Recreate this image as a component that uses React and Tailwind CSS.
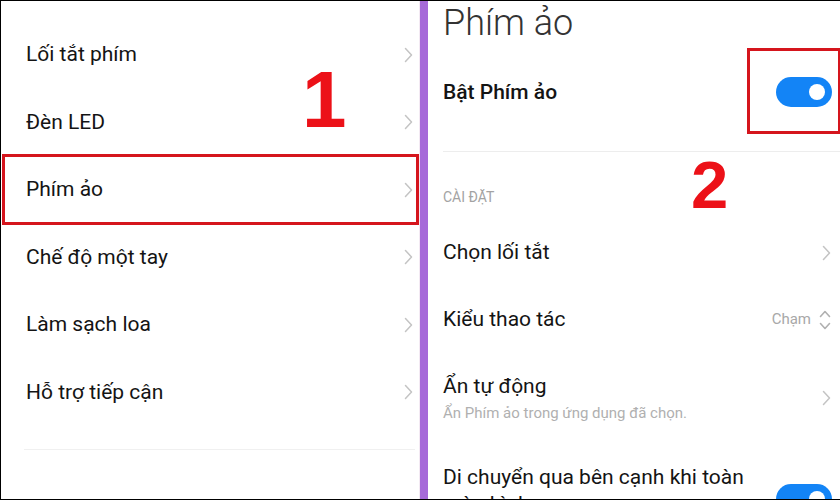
import React from "react";

const Chevron = ({ className = "" }) => (
  <svg width="9" height="16" viewBox="0 0 9 16" className={className}>
    <path d="M1.5 1.5 L7.5 8 L1.5 14.5" fill="none" stroke="#c4c4c4" strokeWidth="1.5" strokeLinecap="round" strokeLinejoin="round" />
  </svg>
);

const UpDown = () => (
  <svg width="12" height="22" viewBox="0 0 12 22">
    <path d="M1.5 7.5 L6 2.5 L10.5 7.5" fill="none" stroke="#b0b0b0" strokeWidth="1.6" strokeLinecap="round" strokeLinejoin="round" />
    <path d="M1.5 14.5 L6 19.5 L10.5 14.5" fill="none" stroke="#b0b0b0" strokeWidth="1.6" strokeLinecap="round" strokeLinejoin="round" />
  </svg>
);

const Toggle = () => (
  <div className="w-[56px] h-[30px] rounded-full bg-[#1384f6] flex items-center justify-end pr-[7px]">
    <div className="w-[16px] h-[16px] rounded-full bg-white" />
  </div>
);

const leftItems = ["Lối tắt phím", "Đèn LED", "Phím ảo", "Chế độ một tay", "Làm sạch loa", "Hỗ trợ tiếp cận"];

export default function App() {
  return (
    <div
      className="relative w-[840px] h-[500px] overflow-hidden bg-white border-t border-l border-b border-black flex text-[#141414]"
      style={{ fontFamily: "Roboto, 'Noto Sans', sans-serif" }}
    >
      {/* Left panel */}
      <div className="w-[419px] h-full shrink-0 flex flex-col pt-[20px] border-r border-[#f3e9f3]">
        {leftItems.map((t) => (
          <div key={t} className="h-[67.5px] shrink-0 flex items-center justify-between pl-[25px] pr-[6px]">
            <span className="text-[21px] leading-none">{t}</span>
            <Chevron />
          </div>
        ))}
        <div className="mt-[23px] ml-[23px] mr-[4px] h-px shrink-0 bg-[#f0f0f0]" />
      </div>

      {/* Divider */}
      <div className="w-[8px] h-full shrink-0 bg-[#a66ad9]" />

      {/* Right panel */}
      <div className="flex-1 h-full flex flex-col pl-[15px]">
        <div className="h-[44px] shrink-0 flex items-center">
          <span className="text-[36px] font-light leading-none text-[#333]">Phím ảo</span>
        </div>
        <div className="h-[94px] shrink-0 flex items-center justify-between pr-[8px]">
          <span className="text-[21px] font-medium leading-none">Bật Phím ảo</span>
          <Toggle />
        </div>
        <div className="mt-[12px] h-px shrink-0 bg-[#ededed]" />
        <div className="h-[67px] shrink-0 pt-[37px]">
          <div className="text-[14px] leading-[16px] text-[#a3a3a3]">CÀI ĐẶT</div>
        </div>
        <div className="h-[67px] shrink-0 flex items-center justify-between pr-[9px]">
          <span className="text-[21px] leading-none">Chọn lối tắt</span>
          <Chevron />
        </div>
        <div className="h-[67px] shrink-0 flex items-center justify-between pr-[9px]">
          <span className="text-[21px] leading-none">Kiểu thao tác</span>
          <div className="flex items-center gap-[8px]">
            <span className="text-[15px] text-[#a8a8a8] leading-none">Chạm</span>
            <UpDown />
          </div>
        </div>
        <div className="h-[92px] shrink-0 flex items-start justify-between pr-[9px] pt-[20px]">
          <div className="flex flex-col">
            <span className="text-[21px] leading-[26px]">Ẩn tự động</span>
            <span className="text-[15px] leading-[20px] mt-[4px] text-[#b0b0b0]">Ẩn Phím ảo trong ứng dụng đã chọn.</span>
          </div>
          <Chevron className="mt-[17px]" />
        </div>
        <div className="shrink-0 flex items-start justify-between pr-[8px] pt-[19px]">
          <span className="text-[21px] leading-[27px] w-[320px]">Di chuyển qua bên cạnh khi toàn màn hình</span>
          <div className="mt-[20px]">
            <Toggle />
          </div>
        </div>
      </div>

      {/* Annotations */}
      <div className="absolute left-[1px] top-[153px] w-[417px] h-[71px] border-[3px] border-[#d5151d]" />
      <div
        className="absolute left-[301px] top-[59px] text-[80px] leading-none font-bold text-[#ec1118]"
        style={{ fontFamily: "'Liberation Sans', Arial, sans-serif" }}
      >
        1
      </div>
      <div className="absolute left-[746px] top-[47px] w-[94px] h-[86px] border-[3px] border-[#d5151d]" />
      <div
        className="absolute left-[690px] top-[150px] text-[67px] leading-none font-bold text-[#ec1118]"
        style={{ fontFamily: "'Liberation Sans', Arial, sans-serif" }}
      >
        2
      </div>
    </div>
  );
}
